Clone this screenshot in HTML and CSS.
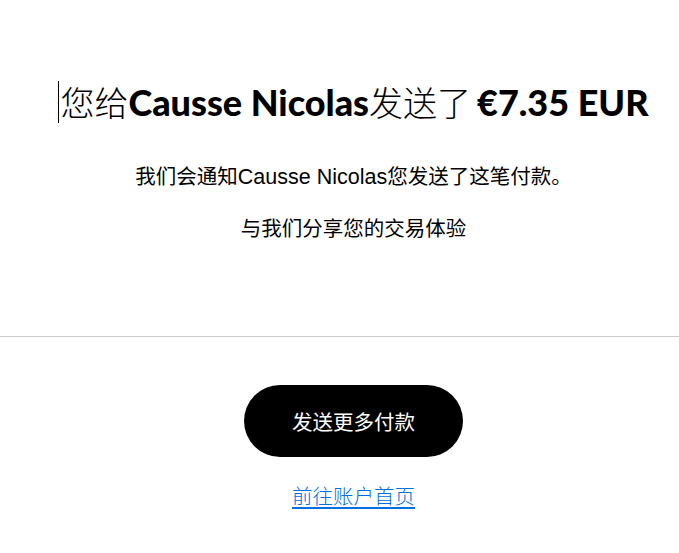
FILE: index.html
```html
<!DOCTYPE html>
<html lang="zh-CN">
<head>
<meta charset="utf-8">
<title>付款已发送</title>
<link rel="stylesheet" href="styles.css">
</head>
<body>
<main class="page">
  <section class="summary">
    <h1 class="title"><span class="caret"></span>您给<span class="latin">Causse Nicolas</span>发送了<span class="latin amount">€7.35 EUR</span></h1>
    <p class="note">我们会通知<span class="latin-sm">Causse Nicolas</span>您发送了这笔付款。</p>
    <p class="note">与我们分享您的交易体验</p>
  </section>
  <hr class="divider">
  <section class="actions">
    <button class="primary" type="button">发送更多付款</button>
    <a class="home-link" href="#">前往账户首页</a>
  </section>
</main>
</body>
</html>
```

FILE: styles.css
```css
html, body {
  margin: 0;
  padding: 0;
  background: #ffffff;
}
body {
  font-family: "Noto Sans CJK SC", "Liberation Sans", sans-serif;
  color: #000;
}
.page {
  display: flex;
  flex-direction: column;
}
.summary {
  display: flex;
  flex-direction: column;
  align-items: center;
  padding: 78px 0 0 28px;
  height: 336px;
  box-sizing: border-box;
}
.title {
  margin: 0;
  font-size: 34px;
  font-weight: 300;
  line-height: 48px;
  white-space: nowrap;
  display: flex;
  align-items: center;
}
.caret {
  display: inline-block;
  width: 1px;
  height: 42px;
  background: #000;
  margin-right: 1px;
}
.latin {
  font-family: "Lato", sans-serif;
  font-weight: 900;
  font-size: 36px;
}
.amount {
  margin-left: 6px;
}
.note {
  margin: 0 0 22px 0;
  font-size: 20.5px;
  font-weight: 400;
  line-height: 28px;
}
.title + .note {
  margin-top: 35px;
}
.latin-sm {
  font-family: "Liberation Sans", sans-serif;
  font-size: 21.5px;
}
.divider {
  margin: 0;
  border: 0;
  border-top: 1px solid #cbcbcb;
}
.actions {
  display: flex;
  flex-direction: column;
  align-items: center;
  padding: 48px 0 0 28px;
}
.primary {
  width: 219px;
  height: 72px;
  border: 0;
  border-radius: 36px;
  background: #000;
  color: #fff;
  font-family: "Noto Sans CJK SC", sans-serif;
  font-size: 20.5px;
  font-weight: 400;
  cursor: pointer;
}
.home-link {
  margin-top: 24px;
  color: #0070e0;
  font-size: 20.5px;
  font-weight: 300;
  line-height: 28px;
  text-decoration: underline;
  text-underline-offset: 3px;
}
```
